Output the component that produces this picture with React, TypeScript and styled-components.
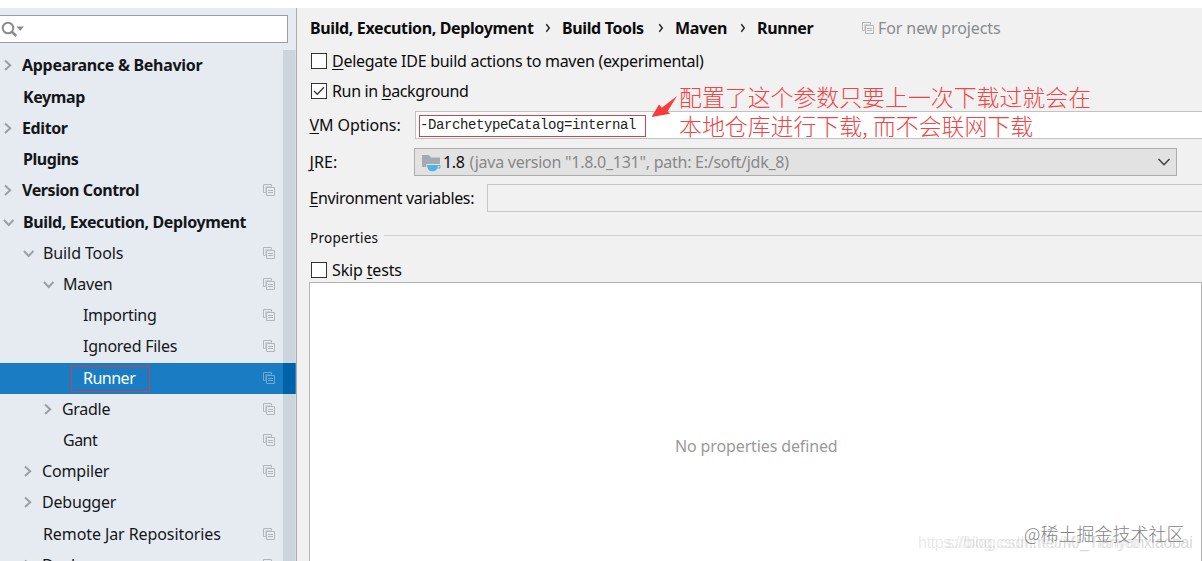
import styled, { createGlobalStyle } from "styled-components";

const GlobalStyle = createGlobalStyle`
  * {
    box-sizing: border-box;
  }
  body {
    margin: 0;
    overflow: hidden;
    background: #fff;
    font-family: "Noto Sans", "Noto Sans CJK SC", sans-serif;
    font-size: 16px;
    color: #111;
  }
`;

const Page = styled.div`
  position: relative;
  display: flex;
  width: 1202px;
  height: 561px;
  padding-top: 8px;
  overflow: hidden;
`;

const Sidebar = styled.aside`
  display: flex;
  flex-direction: column;
  flex: none;
  width: 297px;
  border-right: 1px solid #a9abad;
  background: #e6ebf1;
`;

const SearchField = styled.div`
  flex: none;
  display: flex;
  align-items: center;
  width: 288px;
  height: 28px;
  margin-top: 7px;
  border: 1px solid #9b9d9f;
  border-left: 0;
  background: #fff;
`;

const TreeArea = styled.div`
  display: flex;
  flex: 1;
  min-height: 0;
  margin-top: 7px;
  position: relative;
`;

const Tree = styled.ul`
  flex: 1;
  margin: 0;
  padding: 0.8px 0 0;
  list-style: none;
  overflow: hidden;
`;

const Scrollbar = styled.div`
  position: absolute;
  top: 0;
  right: 0;
  bottom: 0;
  width: 13px;
  border-right: 1px solid rgba(255, 255, 255, 0.2);
  background: rgba(0, 40, 50, 0.11);
`;

const TreeRow = styled.li<{ $level: number; $bold?: boolean; $selected?: boolean }>`
  display: flex;
  align-items: center;
  height: 31.22px;
  padding-left: ${({ $level }) => $level * 20}px;
  padding-bottom: 2px;
  font-weight: ${({ $bold }) => ($bold ? 700 : 400)};
  color: ${({ $selected }) => ($selected ? "#fff" : "#14171a")};
  background: ${({ $selected }) =>
    $selected ? "linear-gradient(to left, #006ab8 13px, #1a7dc4 13px)" : "transparent"};
`;

const ArrowSlot = styled.span<{ $narrow: boolean }>`
  display: flex;
  flex: none;
  width: ${({ $narrow }) => ($narrow ? 22 : 23)}px;
  padding-left: 2px;
`;

const TreeLabel = styled.span<{ $spacing: number }>`
  position: relative;
  flex: 1;
  white-space: nowrap;
  line-height: 24px;
  letter-spacing: ${({ $spacing }) => $spacing}px;
`;

const LabelMark = styled.span`
  position: absolute;
  left: -12px;
  top: 0.4px;
  width: 79px;
  height: 26px;
  border: 1px solid #c5434f;
`;

const CopySlot = styled.span`
  display: flex;
  width: 33px;
`;

const Content = styled.main`
  flex: 1;
  min-width: 0;
  display: flex;
  flex-direction: column;
  padding-left: 12px;
  background: #f1f1f1;
  color: #0c0c0c;
`;

const Breadcrumbs = styled.div`
  display: flex;
  align-items: center;
  height: 40px;
  padding-left: 1px;
  font-weight: 700;
  white-space: nowrap;
`;

const Crumb = styled.span<{ $width: number }>`
  width: ${({ $width }) => $width}px;
  letter-spacing: -0.37px;
`;

const CrumbArrow = styled.span`
  display: flex;
  justify-content: center;
  width: 29px;
  padding-left: 1px;
`;

const ProjectHint = styled.span`
  display: flex;
  align-items: center;
  gap: 4px;
  margin-left: 50px;
  font-weight: 400;
  color: #888b8d;
  letter-spacing: -0.1px;
`;

const CheckRow = styled.label<{ $height: number; $top?: number }>`
  display: flex;
  align-items: center;
  gap: 5px;
  height: ${({ $height }) => $height}px;
  padding: ${({ $top = 0 }) => $top}px 0 0 2px;
  white-space: nowrap;
`;

const CheckBox = styled.span`
  display: flex;
  align-items: center;
  justify-content: center;
  width: 16px;
  height: 16px;
  border: 1px solid #333;
  background: #fff;
`;

const Text = styled.span<{ $spacing: number }>`
  letter-spacing: ${({ $spacing }) => $spacing}px;
  white-space: nowrap;
`;

const Key = styled.span`
  text-decoration: underline;
  text-underline-offset: 2px;
  text-decoration-thickness: 1px;
`;

const FieldRow = styled.div<{ $top?: number; $gap: number }>`
  display: flex;
  align-items: center;
  height: 28px;
  margin: ${({ $top = 0, $gap }) => `${$top}px 0 ${$gap}px`};
`;

const FieldLabel = styled.span<{ $width: number; $spacing: number }>`
  flex: none;
  width: ${({ $width }) => $width}px;
  padding-left: 0.5px;
  letter-spacing: ${({ $spacing }) => $spacing}px;
  white-space: nowrap;
`;

const VmInput = styled.div`
  flex: 1;
  height: 28px;
  padding: 3px;
  border: 1px solid #c3c3c3;
  border-right: 0;
  background: #fff;
`;

const VmValue = styled.div`
  width: 227px;
  height: 22px;
  border: 1px solid #c84a50;
  font: 14px/18px "Liberation Mono", monospace;
  letter-spacing: -0.4px;
  color: #222;
  white-space: nowrap;
`;

const JreSelect = styled.div`
  display: flex;
  align-items: center;
  width: 763px;
  height: 28px;
  padding: 0 5px 0 6px;
  border: 1px solid #adadad;
  background: #e2e2e2;
  white-space: nowrap;
`;

const JreVersion = styled.span`
  margin: 0 5px 0 1px;
  letter-spacing: -0.35px;
`;

const JrePath = styled.span`
  flex: 1;
  color: #888;
  letter-spacing: -0.26px;
`;

const EnvInput = styled.div`
  flex: 1;
  height: 28px;
  border: 1px solid #c6c6c6;
  border-right: 0;
`;

const GroupTitle = styled.div`
  display: flex;
  align-items: center;
  gap: 6px;
  height: 24px;
  margin-top: 14px;
  padding-left: 1px;
  font-size: 13.5px;
  letter-spacing: 0.28px;

  &::after {
    content: "";
    flex: 1;
    height: 1px;
    margin-bottom: 5px;
    background: #cfcfcf;
  }
`;

const PropertyList = styled.div`
  flex: 1;
  border: 1px solid #b4b4b4;
  border-bottom: 0;
  background: #fff;
  padding: 152px 0 0 365px;
  color: #999;
  letter-spacing: -0.13px;
`;

const Annotation = styled.div`
  position: absolute;
  left: 679px;
  top: 82px;
  font: 300 22.9px/29px "Noto Sans CJK SC", sans-serif;
  color: #f04446;
  white-space: nowrap;
`;

const Pointer = styled.svg`
  position: absolute;
  left: 650px;
  top: 95px;
`;

const BlogMark = styled.div<{ $left: number; $spacing: number }>`
  position: absolute;
  left: ${({ $left }) => $left}px;
  top: 532px;
  font: 16px/22px "Liberation Sans", sans-serif;
  letter-spacing: ${({ $spacing }) => $spacing}px;
  color: rgba(120, 120, 120, 0.17);
  white-space: nowrap;
`;

const CommunityMark = styled.div`
  position: absolute;
  left: 1024px;
  top: 520px;
  font: 300 18px/26px "Noto Sans CJK SC", sans-serif;
  color: #858585;
  white-space: nowrap;
`;

const Chevron = ({ open }: { open?: boolean }) => (
  <svg width="14" height="14" viewBox="0 0 14 14" fill="none" stroke="#9a9fa3" strokeWidth="2">
    <path d={open ? "M2 5 6.7 10 11.4 5" : "M3 2.5 8.2 7.3 3 12.1"} />
  </svg>
);

const CopyIcon = ({ color = "#b1b8bc" }: { color?: string }) => (
  <svg width="12" height="12" viewBox="0 0 12 12" fill="none" stroke={color}>
    <path d="M2.5 8.5H.5V.5H8.5V2.5M3.5 3.5H11.5V11.5H3.5ZM5 6.5H10M5 8.5H10" />
    <path d="M2.5 2.5V8.5M2.5 2.5H8.5" opacity=".45" />
  </svg>
);

const SearchIcon = () => (
  <svg width="26" height="20" viewBox="0 0 26 20" fill="none">
    <circle cx="8" cy="9" r="5.3" stroke="#8c8c8c" strokeWidth="2" />
    <path d="M12 13 16.3 17" stroke="#8c8c8c" strokeWidth="2.5" />
    <path d="M16.5 7.5H24L20.2 11.7Z" fill="#8c8c8c" />
  </svg>
);

const JdkIcon = () => (
  <svg width="21" height="20" viewBox="0 0 21 20">
    <path d="M1 3H8L10 5.5H19V15H1Z" fill="#a4aab0" />
    <path d="M5 12H20V16.5H15Q14 18.5 12 18.5H10Q6 18 5 12Z" fill="#e2e2e2" />
    <path d="M6 13H17Q16.5 18.8 12.5 19.3H10.5Q6.5 18.8 6 13Z" fill="#4cb4e4" />
    <path d="M16 13.5H19V16H15.5" fill="none" stroke="#4cb4e4" />
  </svg>
);

const CrumbChevron = () => (
  <svg width="6" height="10" viewBox="0 0 6 10" fill="none" stroke="#222" strokeWidth="1.4">
    <path d="M1.3 1.2 4.3 5 1.3 8.8" />
  </svg>
);

type Item = {
  label: string;
  level: number;
  arrow?: "open" | "closed";
  bold?: boolean;
  copy?: boolean;
  selected?: boolean;
  spacing?: number;
};

const items: Item[] = [
  { label: "Appearance & Behavior", level: 0, arrow: "closed", bold: true, spacing: -0.3 },
  { label: "Keymap", level: 0, bold: true, spacing: -0.4 },
  { label: "Editor", level: 0, arrow: "closed", bold: true, spacing: -0.4 },
  { label: "Plugins", level: 0, bold: true, spacing: -0.45 },
  { label: "Version Control", level: 0, arrow: "closed", bold: true, copy: true, spacing: -0.42 },
  { label: "Build, Execution, Deployment", level: 0, arrow: "open", bold: true, spacing: -0.38 },
  { label: "Build Tools", level: 1, arrow: "open", copy: true, spacing: -0.1 },
  { label: "Maven", level: 2, arrow: "open", copy: true, spacing: -0.2 },
  { label: "Importing", level: 3, copy: true, spacing: -0.3 },
  { label: "Ignored Files", level: 3, copy: true, spacing: -0.25 },
  { label: "Runner", level: 3, copy: true, selected: true, spacing: -0.5 },
  { label: "Gradle", level: 2, arrow: "closed", copy: true, spacing: -0.3 },
  { label: "Gant", level: 2, copy: true, spacing: -0.5 },
  { label: "Compiler", level: 1, arrow: "closed", copy: true, spacing: -0.15 },
  { label: "Debugger", level: 1, arrow: "closed", spacing: -0.2 },
  { label: "Remote Jar Repositories", level: 1, copy: true, spacing: -0.09 },
  { label: "Docker", level: 1, arrow: "closed", copy: true },
];

const crumbs = [
  { label: "Build, Execution, Deployment", width: 223 },
  { label: "Build Tools", width: 84 },
  { label: "Maven", width: 53 },
  { label: "Runner", width: 55 },
];

function SettingsTree() {
  return (
    <Sidebar>
      <SearchField>
        <SearchIcon />
      </SearchField>
      <TreeArea>
        <Tree>
          {items.map((item) => (
            <TreeRow
              key={item.label}
              $level={item.level}
              $bold={item.bold}
              $selected={item.selected}
            >
              <ArrowSlot $narrow={item.arrow === "closed"}>
                {item.arrow && <Chevron open={item.arrow === "open"} />}
              </ArrowSlot>
              <TreeLabel $spacing={item.spacing ?? 0}>
                {item.label}
                {item.selected && <LabelMark />}
              </TreeLabel>
              <CopySlot>
                {item.copy && <CopyIcon color={item.selected ? "#72a9d0" : undefined} />}
              </CopySlot>
            </TreeRow>
          ))}
        </Tree>
        <Scrollbar />
      </TreeArea>
    </Sidebar>
  );
}

function BreadcrumbBar() {
  return (
    <Breadcrumbs>
      {crumbs.flatMap((crumb, i) => [
        i > 0 && (
          <CrumbArrow key={`arrow-${crumb.label}`}>
            <CrumbChevron />
          </CrumbArrow>
        ),
        <Crumb key={crumb.label} $width={crumb.width}>
          {crumb.label}
        </Crumb>,
      ])}
      <ProjectHint>
        <CopyIcon color="#b3b7b9" />
        For new projects
      </ProjectHint>
    </Breadcrumbs>
  );
}

export default function App() {
  return (
    <>
      <GlobalStyle />
      <Page>
        <SettingsTree />
        <Content>
          <BreadcrumbBar />
          <CheckRow $height={26}>
            <CheckBox />
            <Text $spacing={-0.28}>
              <Key>D</Key>elegate IDE build actions to maven (experimental)
            </Text>
          </CheckRow>
          <CheckRow $height={34}>
            <CheckBox>
              <svg width="14" height="14" viewBox="0 0 14 14" fill="none" stroke="#333" strokeWidth="1.3">
                <path d="M2 7 5.3 10.3 12 3.3" />
              </svg>
            </CheckBox>
            <Text $spacing={-0.35}>
              Run in <Key>b</Key>ackground
            </Text>
          </CheckRow>
          <FieldRow $top={3} $gap={9}>
            <FieldLabel $width={106} $spacing={-0.08}>
              <Key>V</Key>M Options:
            </FieldLabel>
            <VmInput>
              <VmValue>-DarchetypeCatalog=internal</VmValue>
            </VmInput>
          </FieldRow>
          <FieldRow $gap={8}>
            <FieldLabel $width={105} $spacing={0.1}>
              <Key>J</Key>RE:
            </FieldLabel>
            <JreSelect>
              <JdkIcon />
              <JreVersion>1.8</JreVersion>
              <JrePath>(java version "1.8.0_131", path: E:/soft/jdk_8)</JrePath>
              <svg width="14" height="12" viewBox="0 0 14 12" fill="none" stroke="#444" strokeWidth="1.6">
                <path d="M1.5 3 7 8.7 12.5 3" />
              </svg>
            </JreSelect>
          </FieldRow>
          <FieldRow $gap={0}>
            <FieldLabel $width={178} $spacing={-0.36}>
              <Key>E</Key>nvironment variables:
            </FieldLabel>
            <EnvInput />
          </FieldRow>
          <GroupTitle>Properties</GroupTitle>
          <CheckRow $height={32} $top={8}>
            <CheckBox />
            <Text $spacing={-0.15}>
              Skip <Key>t</Key>ests
            </Text>
          </CheckRow>
          <PropertyList>No properties defined</PropertyList>
        </Content>
        <Pointer width="28" height="24" viewBox="0 0 28 24">
          <path d="M1.5 22 9 9.5 11.8 12.8 27 1 17.5 16.5 20.2 18.8Z" fill="#f83c3c" />
        </Pointer>
        <Annotation>
          配置了这个参数只要上一次下载过就会在
          <br />
          本地仓库进行下载, 而不会联网下载
        </Annotation>
        <BlogMark $left={918} $spacing={-0.35}>https://blog.csdn.net/m0_Tianyatlixiaobai</BlogMark>
        <BlogMark $left={946} $spacing={-0.25}>s://blog.csdn.net/Mr_Tianyanxiaobai</BlogMark>
        <CommunityMark>@稀土掘金技术社区</CommunityMark>
      </Page>
    </>
  );
}
